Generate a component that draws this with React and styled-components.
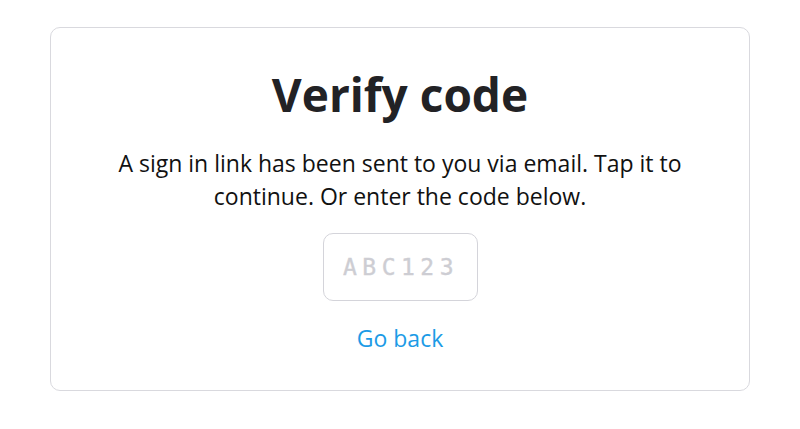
import React from "react";
import styled, { createGlobalStyle } from "styled-components";

const GlobalStyle = createGlobalStyle`
  body {
    margin: 0;
    background: #ffffff;
    font-family: "Open Sans", "Liberation Sans", sans-serif;
  }
`;

const Page = styled.div`
  padding: 27px 50px 0 50px;
  width: 800px;
  box-sizing: border-box;
`;

const Card = styled.div`
  box-sizing: border-box;
  width: 700px;
  height: 364px;
  border: 1px solid #d9d9de;
  border-radius: 10px;
  display: flex;
  flex-direction: column;
  align-items: center;
  padding-top: 36px;
`;

const Title = styled.h1`
  margin: 0;
  font-size: 46px;
  font-weight: 700;
  color: #222225;
  line-height: 60px;
`;

const Message = styled.p`
  margin: 23px 0 0 0;
  max-width: 600px;
  text-align: center;
  font-size: 23px;
  line-height: 33px;
  color: #111;
`;

const CodeInput = styled.input`
  margin-top: 20px;
  box-sizing: border-box;
  width: 155px;
  height: 68px;
  padding: 0 0 0 2px;
  border: 1px solid #d4d4da;
  border-radius: 10px;
  text-align: center;
  font-family: "DejaVu Sans Mono", "Liberation Mono", monospace;
  font-weight: 400;
  font-size: 23px;
  letter-spacing: 5.5px;
  color: #222;
  outline: none;
  -webkit-text-stroke: 0.4px #cfcfd4;

  &::placeholder {
    color: #cdcdd3;
  }
`;

const BackLink = styled.a`
  margin-top: 22px;
  font-size: 23px;
  line-height: 31px;
  color: #1c9be6;
  text-decoration: none;
  cursor: pointer;
`;

export default function App() {
  return (
    <>
      <GlobalStyle />
      <Page>
        <Card>
          <Title>Verify code</Title>
          <Message>
            A sign in link has been sent to you via email. Tap it to continue.
            Or enter the code below.
          </Message>
          <CodeInput placeholder="ABC123" />
          <BackLink>Go back</BackLink>
        </Card>
      </Page>
    </>
  );
}
